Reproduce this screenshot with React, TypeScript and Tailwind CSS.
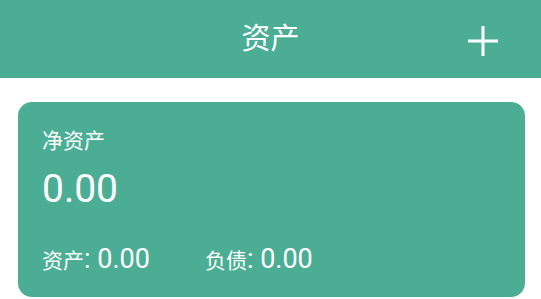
export default function App() {
  const font = { fontFamily: 'Roboto, "Noto Sans CJK SC", sans-serif' };
  return (
    <div className="w-[541px] h-[299px] bg-white overflow-hidden text-white" style={font}>
      {/* Header */}
      <header className="relative h-[78px] bg-[#4bae94] flex items-center justify-center">
        <h1 className="text-[29px] leading-none">资产</h1>
        <button className="absolute right-[41px] top-[24px] w-[34px] h-[34px] flex items-center justify-center">
          <svg width="32" height="32" viewBox="0 0 32 32" fill="none" stroke="white" strokeWidth="3">
            <path d="M16 1v30M1 16h30" />
          </svg>
        </button>
      </header>

      {/* Net assets card */}
      <div className="ml-[18px] mr-[16px] mt-[24px] h-[195px] rounded-[14px] bg-[#4bae94] px-[24px] pt-[29px]">
        <div className="text-[21px] leading-none">净资产</div>
        <div className="mt-[18px] text-[39px] leading-none">0.00</div>
        <div className="mt-[37px] flex items-baseline gap-[55px] leading-none">
          <span>
            <span className="text-[21px]">资产</span>
            <span className="text-[27px]">: 0.00</span>
          </span>
          <span>
            <span className="text-[21px]">负债</span>
            <span className="text-[27px]">: 0.00</span>
          </span>
        </div>
      </div>
    </div>
  );
}
